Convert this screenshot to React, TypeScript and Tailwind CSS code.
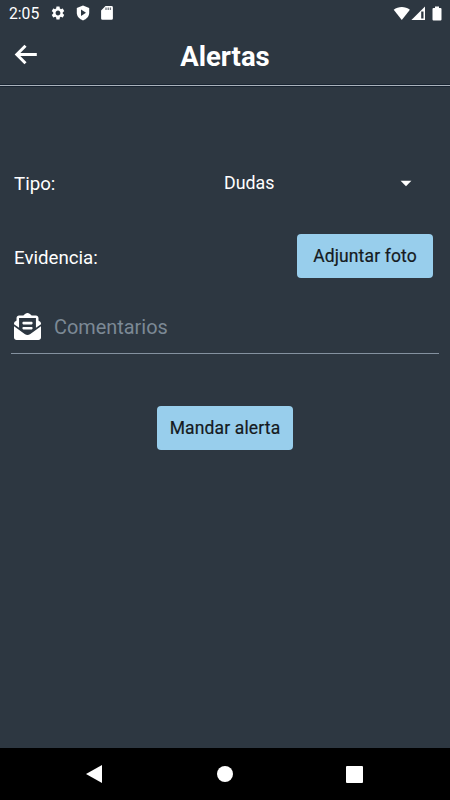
import React, { useState } from 'react';
import { FaEnvelopeOpenText } from 'react-icons/fa';
import { MdSettings, MdArrowDropDown } from 'react-icons/md';

interface AlertButtonProps {
  children: React.ReactNode;
}

const AlertButton: React.FC<AlertButtonProps> = ({ children }) => (
  <button
    type="button"
    className="h-[44px] w-[136px] rounded-[4px] bg-[#98ceec] pt-[2px] text-[17.5px] leading-none font-normal tracking-[0.14px] whitespace-nowrap text-[#151a21] [-webkit-text-stroke:0.2px_#151a21]"
  >
    {children}
  </button>
);

const StatusBar = () => (
  <div className="flex h-[27px] items-center pr-[8px] pl-[9px]">
    <span className="w-[41px] pt-px text-[15.7px] leading-none">2:05</span>
    <MdSettings className="-mt-px h-4 w-4" />
    <svg className="-mt-px ml-[10px] h-[16px] w-[14px]" viewBox="0 0 14 16">
      <path d="M7 .5 13.2 3v4.8c0 3.6-2.6 6.3-6.2 7.7C3.4 14.1.8 11.4.8 7.8V3z" fill="#fff" />
      <path d="M5 4.6v6.4l5-3.2z" fill="#2d3741" />
    </svg>
    <svg className="-mt-px ml-[11px] h-[14px] w-3" viewBox="0 0 12 14">
      <path d="M4.5 0h6a1.4 1.4 0 0 1 1.4 1.4v11a1.4 1.4 0 0 1-1.4 1.4h-9A1.4 1.4 0 0 1 .1 12.4V4.4z" fill="#fff" />
      <path d="M5 1.5v2.6M7.2 1.5v2.6M9.4 1.5v2.6" stroke="#6d747c" strokeWidth="1.3" />
    </svg>
    <svg className="-mt-px ml-auto h-[15px] w-[49px]" viewBox="0 0 49 15">
      <path d="M.7 3.8C5.3.2 12.3.2 16.9 3.8L8.8 14z" fill="#fff" />
      <path d="M32 .5V14H18.4z" fill="#fff" />
      <path d="M28.2 5.5h2.3v7h-2.3z" fill="#2d3741" />
      <path d="M42 .5h4V2h1.5q1 0 1 1v10.5q0 1-1 1h-7q-1 0-1-1V3q0-1 1-1H42z" fill="#fff" />
    </svg>
  </div>
);

const Header = () => (
  <header className="grid h-[60px] grid-cols-[60px_1fr_60px] items-center border-b border-[#182431] shadow-[inset_0_-1px_0_#aab2bc,inset_0_-2px_0_#182431]">
    <button type="button" aria-label="Atrás" className="-mt-[4px] ml-[14px] w-6">
      <svg className="h-6 w-6" viewBox="0 0 24 24" fill="none" stroke="#fff" strokeWidth="3">
        <path d="M11.5 2.8 2.8 11.5l8.7 8.7M2.8 11.5h20" />
      </svg>
    </button>
    <h1 className="pt-px text-center text-[27.5px] leading-none font-bold">Alertas</h1>
  </header>
);

const NavigationBar = () => (
  <nav className="mt-auto flex h-[52px] items-center justify-between bg-black pr-[87px] pl-[86px]">
    <svg className="h-[18px] w-4" viewBox="0 0 16 18">
      <path d="M16 0v18L0 9z" fill="#fff" />
    </svg>
    <span className="ml-px h-4 w-4 rounded-full bg-white" />
    <span className="h-[17px] w-[17px] rounded-[1px] bg-white" />
  </nav>
);

const App: React.FC = () => {
  const [comment, setComment] = useState('');

  return (
    <div className="flex h-[800px] w-[450px] flex-col overflow-hidden bg-[#2d3741] font-['Roboto',sans-serif] text-white">
      <StatusBar />
      <Header />

      <main>
        <div className="mt-[74px] flex h-11 items-center pl-[14px]">
          <span className="w-[210px] pt-[2px] text-[18.7px] leading-none">Tipo:</span>
          <button type="button" className="flex h-full w-[195px] items-center justify-between text-[17.8px] leading-none">
            Dudas
            <MdArrowDropDown className="-mt-px h-[26px] w-[26px]" />
          </button>
        </div>

        <div className="mt-[29px] flex h-[44px] items-center justify-between pr-[17px] pl-[14px]">
          <span className="pt-[4px] text-[18.7px] leading-none">Evidencia:</span>
          <AlertButton>Adjuntar foto</AlertButton>
        </div>

        <div className="mx-[11px] mt-[22px] flex h-[54px] items-center border-b border-[#84919f] pl-[3px]">
          <FaEnvelopeOpenText className="h-[27px] w-[27px]" />
          <input
            value={comment}
            onChange={(e) => setComment(e.target.value)}
            placeholder="Comentarios"
            className="ml-[13px] w-[340px] bg-transparent pt-[2px] text-[19.9px] text-white outline-none placeholder:text-[#7c8995]"
          />
        </div>

        <div className="mt-[52px] flex justify-center">
          <AlertButton>Mandar alerta</AlertButton>
        </div>
      </main>

      <NavigationBar />
    </div>
  );
};

export default App;
